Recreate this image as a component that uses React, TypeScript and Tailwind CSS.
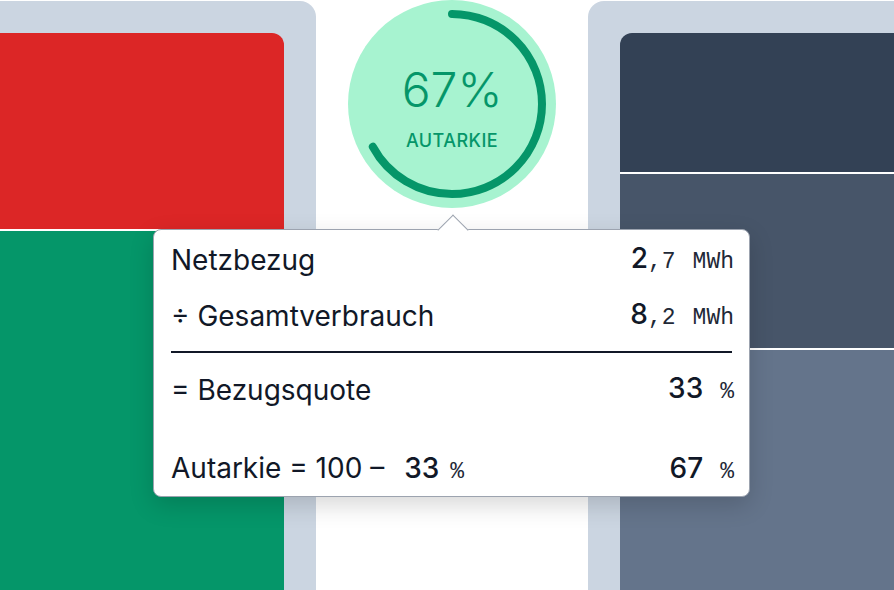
import React from 'react';

const ARC_R = 90;
const ARC_LEN = 2 * Math.PI * ARC_R;
const AUTARKIE = 0.67;

const Unit: React.FC<{ children: React.ReactNode; className?: string }> = ({ children, className = '' }) => (
  <span className={`font-['Liberation_Mono',monospace] text-[23px] text-[#1f2937] ${className}`}>{children}</span>
);

const Row: React.FC<{ label: React.ReactNode; value: React.ReactNode; className?: string }> = ({ label, value, className = '' }) => (
  <div className={`flex h-[56px] items-center justify-between ${className}`}>
    <div className="flex items-baseline leading-[36px]">{label}</div>
    <div className="flex items-baseline leading-[36px]">{value}</div>
  </div>
);

export default function App() {
  return (
    <div className="relative h-[590px] w-[894px] overflow-hidden bg-white font-['Inter',sans-serif] text-[#111827]">
      <div className="grid h-full grid-cols-[316px_272px_306px]">
        {/* left stack */}
        <div className="mt-px flex flex-col rounded-tr-2xl bg-[#cbd5e1] pr-[32px] pt-[32px]">
          <div className="h-[196px] rounded-tr-[12px] bg-[#dc2626]" />
          <div className="flex-1 border-t-2 border-white bg-[#059669]" />
        </div>

        {/* gauge */}
        <div className="flex justify-center">
          <div className="relative flex h-[208px] w-[208px] flex-col items-center justify-center rounded-full bg-[#a7f3d0] pt-[12px]">
            <svg className="absolute inset-0" width="208" height="208" viewBox="0 0 208 208">
              <circle
                cx="104"
                cy="104"
                r={ARC_R}
                fill="none"
                stroke="#059669"
                strokeWidth="8"
                strokeLinecap="round"
                strokeDasharray={`${ARC_LEN * AUTARKIE} ${ARC_LEN}`}
                transform="rotate(-90 104 104)"
              />
            </svg>
            <span className="relative text-5xl leading-none font-light text-[#059669]">67%</span>
            <span className="relative mt-[13px] text-lg leading-7 font-medium tracking-wide text-[#059669] uppercase">Autarkie</span>
          </div>
        </div>

        {/* right stack */}
        <div className="mt-px flex flex-col rounded-tl-2xl bg-[#cbd5e1] pl-[32px] pt-[32px]">
          <div className="h-[139px] rounded-tl-[12px] bg-[#334155]" />
          <div className="h-[176px] border-t-2 border-white bg-[#475569]" />
          <div className="flex-1 border-t-2 border-white bg-[#64748b]" />
        </div>
      </div>

      {/* tooltip */}
      <div className="absolute left-[153px] top-[229px] h-[268px] w-[597px] rounded-lg border border-[#9ca3af] bg-white pl-[17px] pr-[15px] pt-[2px] text-[28px] shadow-[0_8px_24px_rgba(0,0,0,0.16)]">
        <div className="absolute -top-[11px] left-[288px] h-[22px] w-[22px] rotate-45 border-l border-t border-[#9ca3af] bg-white" />
        <Row
          label={<span>Netzbezug</span>}
          value={
            <>
              <span className="font-medium">2</span>
              <Unit>,7</Unit>
              <Unit className="ml-[17px]">MWh</Unit>
            </>
          }
        />
        <Row
          label={<span>÷ Gesamtverbrauch</span>}
          value={
            <>
              <span className="font-medium">8</span>
              <Unit>,2</Unit>
              <Unit className="ml-[17px]">MWh</Unit>
            </>
          }
        />
        <div className="mt-[7px] mr-[2px] h-[2px] bg-[#111827]" />
        <Row
          className="mt-[9px]"
          label={<span>= Bezugsquote</span>}
          value={
            <>
              <span className="font-medium">33</span>
              <Unit className="ml-[17px]">%</Unit>
            </>
          }
        />
        <Row
          className="mt-[24px]"
          label={
            <>
              <span>Autarkie = 100 –</span>
              <span className="ml-[20px] font-medium">33</span>
              <Unit className="ml-[11px]">%</Unit>
            </>
          }
          value={
            <>
              <span className="font-medium">67</span>
              <Unit className="ml-[17px]">%</Unit>
            </>
          }
        />
      </div>
    </div>
  );
}
